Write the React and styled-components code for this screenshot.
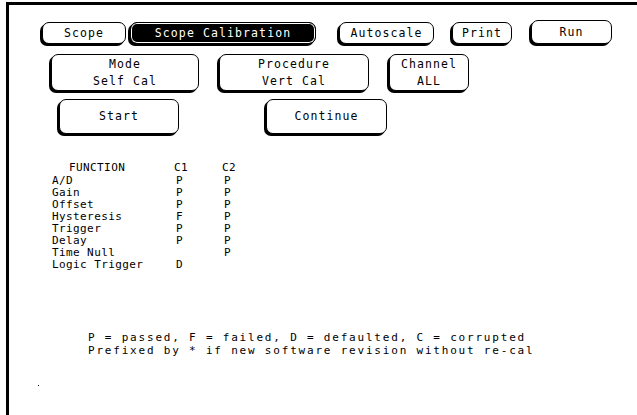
import React from 'react';
import styled, { createGlobalStyle } from 'styled-components';

const GlobalStyle = createGlobalStyle`
  html, body {
    margin: 0;
    padding: 0;
    background: #fff;
    overflow: hidden;
  }
  body {
    font-family: "DejaVu Sans Mono", "Liberation Mono", monospace;
    color: #000;
  }
`;

const Frame = styled.div`
  position: relative;
  margin: 2px 0 0 6px;
  height: 413px;
  border-top: 3px solid #000;
  border-left: 3px solid #000;
  box-sizing: border-box;
`;

const Row = styled.div`
  display: flex;
  align-items: flex-end;
  gap: ${({ $gap }) => $gap ?? 20}px;
  padding-left: ${({ $left }) => $left}px;
  margin-top: ${({ $top }) => $top}px;
`;

const Key = styled.div`
  display: flex;
  align-items: center;
  justify-content: center;
  flex-shrink: 0;
  box-sizing: border-box;
  width: ${({ $w }) => $w}px;
  height: ${({ $h }) => $h || 22}px;
  margin-left: ${({ $ml }) => $ml || 0}px;
  border: 1px solid #000;
  border-radius: 7px;
  box-shadow: -2px 2px 0 #000${({ $on }) => ($on ? ', inset 0 0 0 1px #fff' : '')};
  background: ${({ $on }) => ($on ? '#000' : '#fff')};
  color: ${({ $on }) => ($on ? '#fff' : '#000')};
  font-size: 11.5px;
  letter-spacing: 1.1px;
  line-height: 17px;
  text-align: center;
  white-space: pre;
`;

const Table = styled.div`
  margin-top: ${({ $top }) => $top}px;
  padding-left: 43px;
  font-size: 11px;
  letter-spacing: 0.4px;
  white-space: pre;
`;

const Line = styled.div`
  display: grid;
  grid-template-columns: ${({ $cols }) => $cols};
  height: 12px;
  line-height: 12px;
`;

const Head = styled(Line)`
  margin-bottom: 1px;
  & > span:first-child {
    padding-left: 17px;
  }
`;

const Legend = styled.div`
  margin-top: 60px;
  padding-left: 79px;
  font-size: 11px;
  letter-spacing: 1.8px;
  line-height: 13px;
  white-space: pre;
`;

const Dot = styled.div`
  position: absolute;
  left: 29px;
  top: 380px;
  width: 1px;
  height: 1px;
  background: #000;
`;

const rows = [
  ['A/D', 'P', 'P'],
  ['Gain', 'P', 'P'],
  ['Offset', 'P', 'P'],
  ['Hysteresis', 'F', 'P'],
  ['Trigger', 'P', 'P'],
  ['Delay', 'P', 'P'],
  ['Time Null', '', 'P'],
  ['Logic Trigger', 'D', ''],
];

export default function App() {
  return (
    <>
      <GlobalStyle />
      <Frame>
        <Row $top={15} $left={33} $gap={0}>
          <Key $w={84}>Scope</Key>
          <Key $w={186} $ml={4} $on>Scope Calibration</Key>
          <Key $w={95} $ml={23}>Autoscale</Key>
          <Key $w={60} $ml={18}>Print</Key>
          <Key $w={81} $ml={19} $h={24}>Run</Key>
        </Row>
        <Row $top={10} $left={42} $gap={20}>
          <Key $w={148} $h={37}>{'Mode\nSelf Cal'}</Key>
          <Key $w={150} $h={37}>{'Procedure\nVert Cal'}</Key>
          <Key $w={80} $h={37}>{'Channel\nALL'}</Key>
        </Row>
        <Row $top={8} $left={50} $gap={87}>
          <Key $w={120} $h={35}>Start</Key>
          <Key $w={121} $h={35}>Continue</Key>
        </Row>
        <Table $top={28}>
          <Head $cols="122px 48px auto">
            <span>FUNCTION</span>
            <span>C1</span>
            <span>C2</span>
          </Head>
          {rows.map(([name, c1, c2]) => (
            <Line key={name} $cols="124px 48px auto">
              <span>{name}</span>
              <span>{c1}</span>
              <span>{c2}</span>
            </Line>
          ))}
        </Table>
        <Legend>
          {'P = passed, F = failed, D = defaulted, C = corrupted\nPrefixed by * if new software revision without re-cal'}
        </Legend>
        <Dot />
      </Frame>
    </>
  );
}
